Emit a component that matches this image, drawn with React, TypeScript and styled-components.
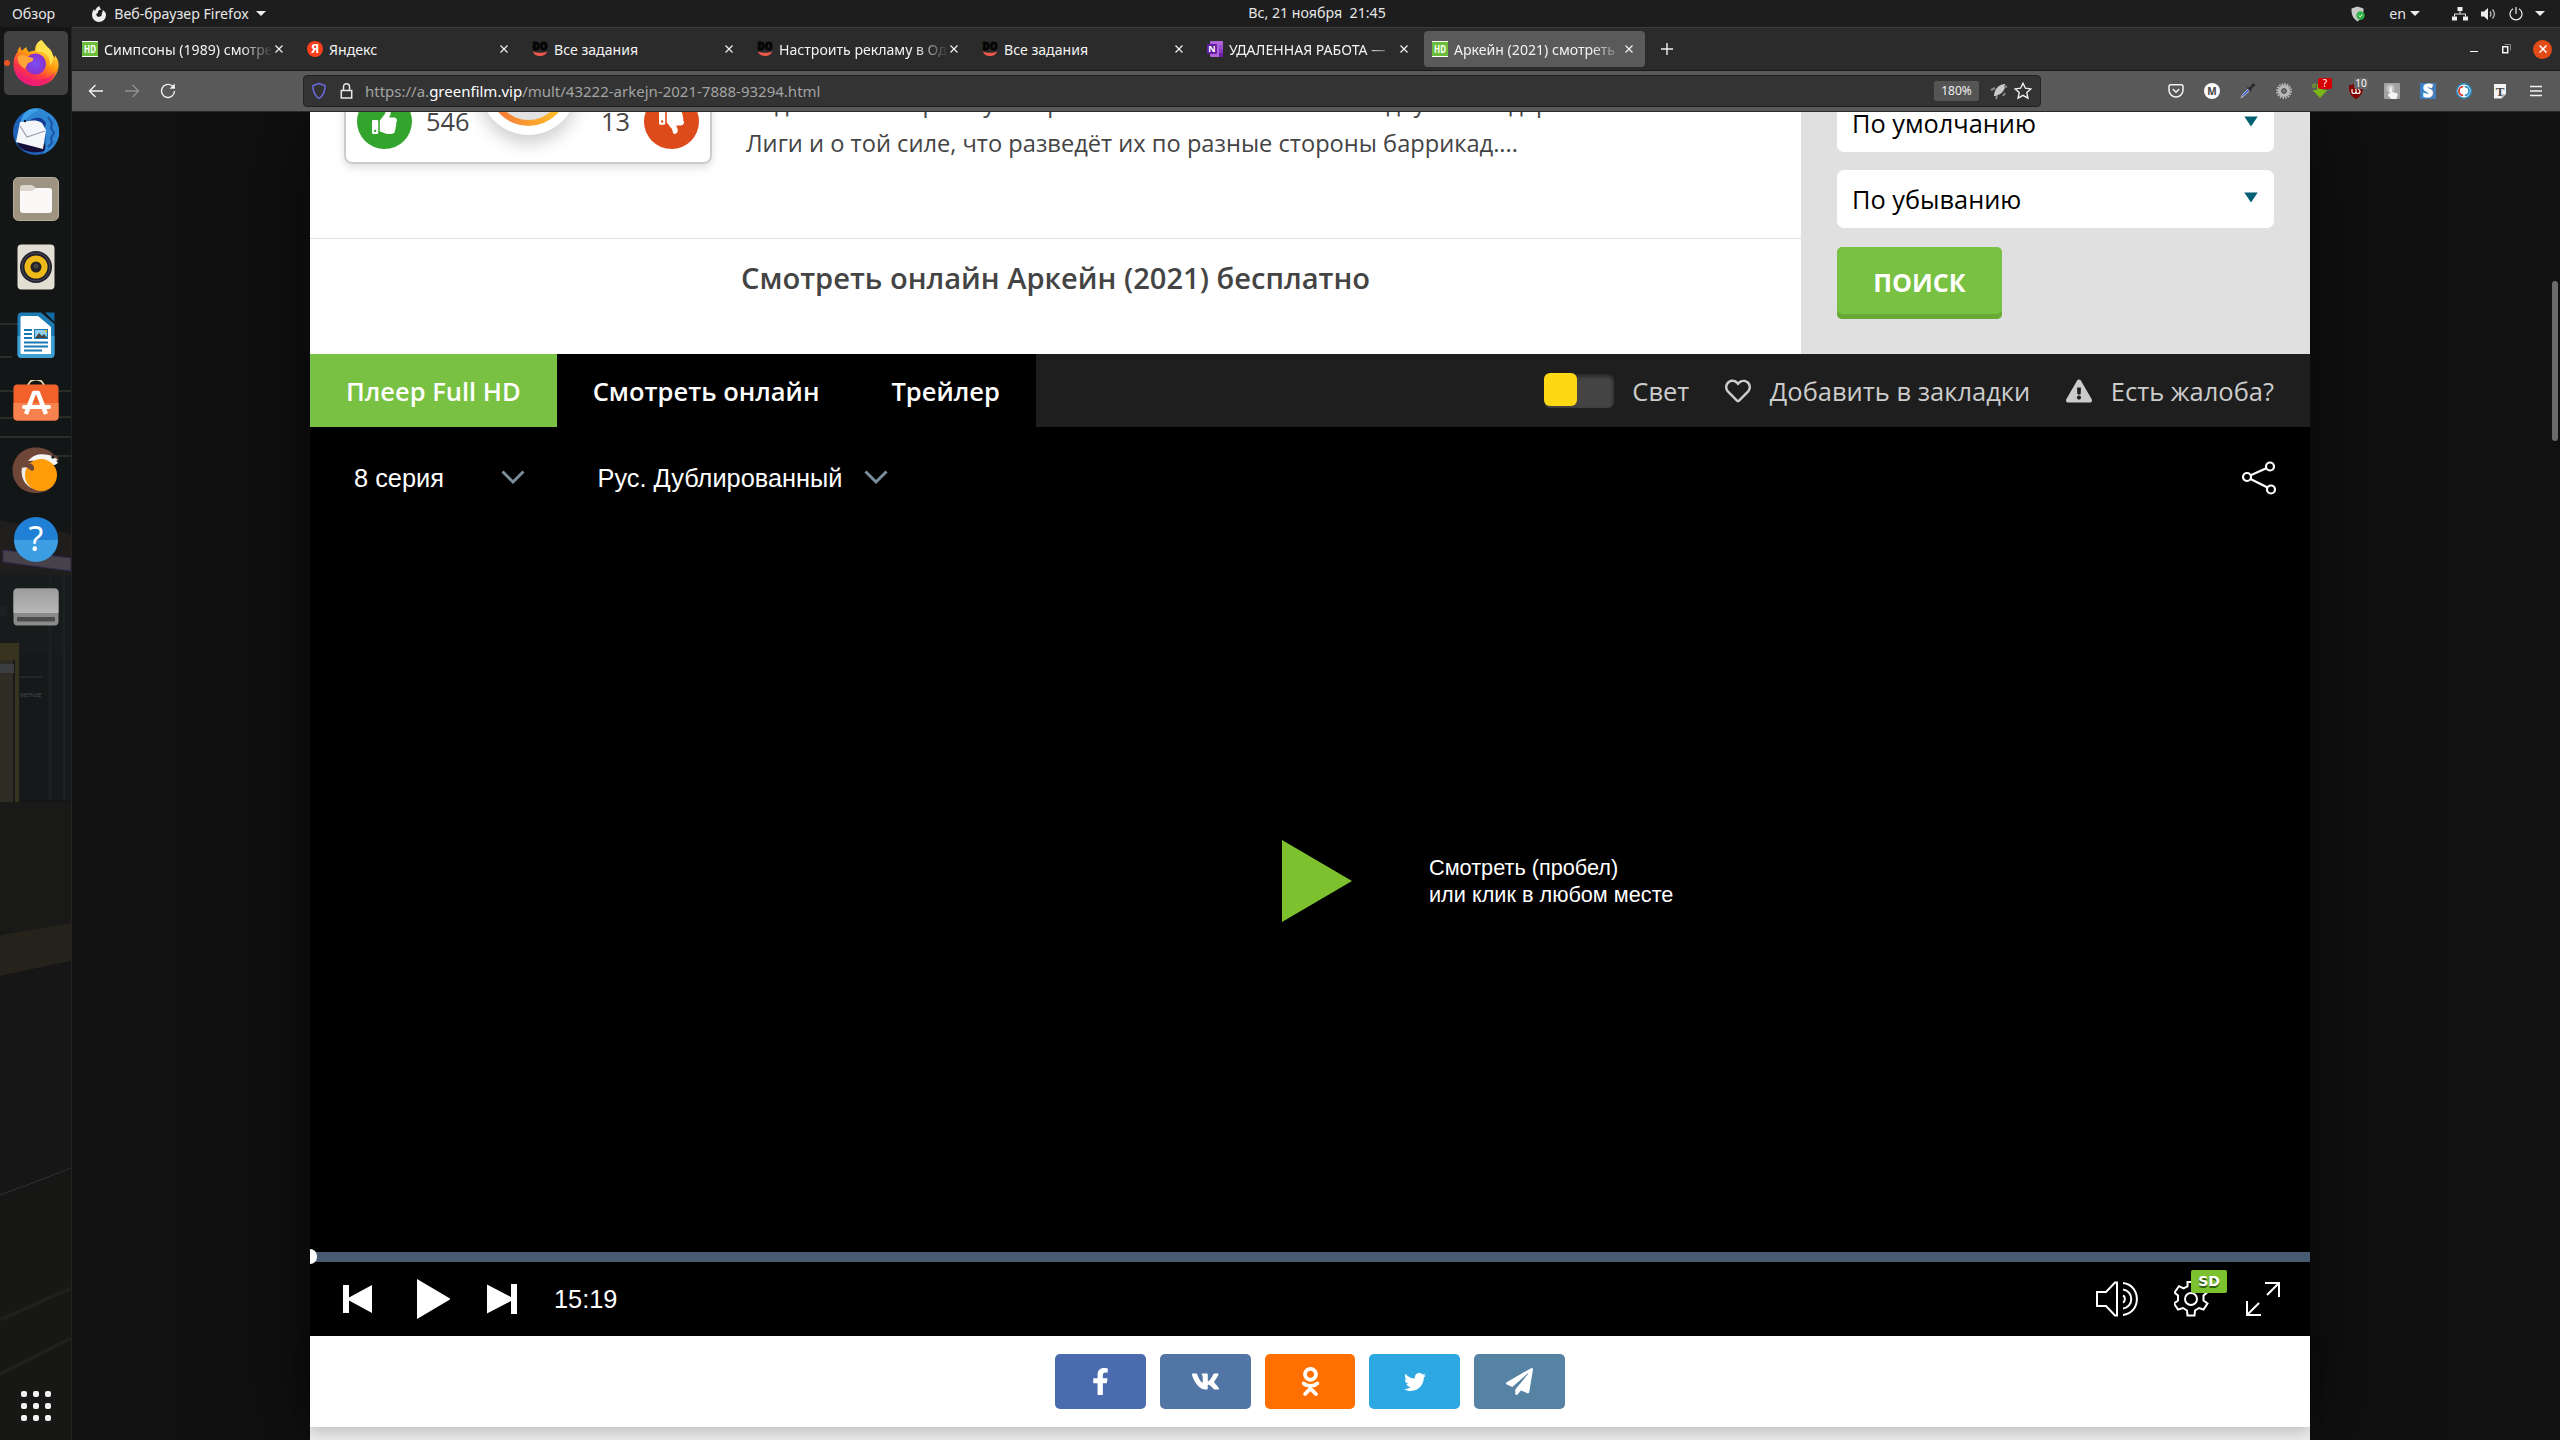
import React from "react";
import styled, { createGlobalStyle } from "styled-components";
import {
  FaFacebookF,
  FaVk,
  FaOdnoklassniki,
  FaTwitter,
  FaPaperPlane,
  FaThumbsUp,
  FaThumbsDown,
  FaRegHeart,
  FaExclamationTriangle,
} from "react-icons/fa";

const uiFont = `"Noto Sans", "Open Sans", sans-serif`;
const pageFont = `"Open Sans", "Noto Sans", sans-serif`;
const playerFont = `"Liberation Sans", Arial, sans-serif`;
const green = "#79c142";

const GlobalStyle = createGlobalStyle`
  *, *::before, *::after { box-sizing: border-box; }
  body { margin: 0; background: #111; overflow: hidden; font-family: ${uiFont}; }
  button { font: inherit; border: 0; padding: 0; background: none; color: inherit; }
  svg { display: block; flex: none; }
`;

/* ---------- desktop shell ---------- */

const Desktop = styled.div`
  width: 2560px;
  height: 1440px;
  display: grid;
  grid-template: 27px 1fr / 72px 1fr;
  overflow: hidden;
`;

const TopBar = styled.header`
  grid-column: 1 / 3;
  display: grid;
  grid-template-columns: 1fr auto 1fr;
  align-items: center;
  background: #1d1d1d;
  color: #e6e6e6;
  font-size: 14.2px;
  line-height: 26px;
  white-space: pre;
`;

const TopLeft = styled.div`
  display: flex;
  align-items: center;
  padding-left: 12px;
`;

const AppMenu = styled.div`
  display: flex;
  align-items: center;
  margin-left: 36px;
  gap: 7px;
`;

const Clock = styled.div`
  margin: 0 -37px 0 37px;
  padding-bottom: 1px;
`;

const Tray = styled.div`
  display: flex;
  align-items: center;
  justify-content: flex-end;
  padding-right: 15px;
`;

const TrayItem = styled.span<{ $gap: number }>`
  display: flex;
  align-items: center;
  margin-left: ${(p) => p.$gap}px;
`;

const Caret = styled.i`
  width: 0;
  height: 0;
  border: 5px solid transparent;
  border-top-color: #eee;
  border-bottom: 0;
`;

/* ---------- dock ---------- */

const Dock = styled.nav`
  position: relative;
  display: flex;
  flex-direction: column;
  align-items: center;
  gap: 4px;
  padding-top: 4px;
  background: #151616;
  border-right: 1px solid #232323;
  overflow: hidden;
`;

const Wallpaper = styled.svg`
  position: absolute;
  inset: 0;
`;

const DockItem = styled.div<{ $active?: boolean }>`
  position: relative;
  width: 64px;
  height: 64px;
  display: flex;
  align-items: center;
  justify-content: center;
  padding-bottom: 1px;
  border-radius: 5px;
  background: ${(p) => (p.$active ? "#424242" : "transparent")};
`;

const RunningDot = styled.i`
  position: absolute;
  left: 0;
  top: 29px;
  width: 6px;
  height: 6px;
  border-radius: 3px;
  background: #e95420;
`;

const AppsGrid = styled.div`
  position: relative;
  display: grid;
  grid-template-columns: repeat(3, 6px);
  gap: 6px;
  margin: auto 0 19px;
`;

const AppsDot = styled.i`
  height: 6px;
  border-radius: 2px;
  background: #f2f2f2;
`;

/* ---------- browser window ---------- */

const Browser = styled.main`
  display: flex;
  flex-direction: column;
  min-width: 0;
  overflow: hidden;
`;

const TabStrip = styled.div`
  height: 44px;
  flex: none;
  display: flex;
  align-items: center;
  background: #2b2b2b;
  border-top: 1px solid #3c3c3c;
  border-bottom: 1px solid #1a1a1a;
`;

const Tab = styled.div<{ $active?: boolean }>`
  width: 221px;
  height: 36px;
  margin: 0 2px;
  padding: 0 12px 0 8px;
  display: flex;
  align-items: center;
  gap: 6px;
  border-radius: 4px;
  background: ${(p) => (p.$active ? "#5a5a5a" : "transparent")};
  color: #f3f3f3;
`;

const TabTitle = styled.span<{ $fade?: boolean }>`
  flex: 1;
  min-width: 0;
  overflow: hidden;
  white-space: nowrap;
  font-size: 14.1px;
  line-height: 20px;
  padding-top: 1px;
  ${(p) => p.$fade && "mask-image: linear-gradient(90deg, #000 calc(100% - 32px), transparent);"}
`;

const TabClose = styled.svg`
  margin-left: -4px;
`;

const NewTab = styled.div`
  margin-left: 14px;
`;

const WindowButtons = styled.div`
  margin-left: auto;
  display: flex;
  align-items: center;
  padding-right: 8px;
  gap: 24px;
`;

const CloseWindow = styled.div`
  width: 19px;
  height: 19px;
  border-radius: 50%;
  background: #e24a18;
  display: grid;
  place-items: center;
  margin-left: -3px;
`;

const Toolbar = styled.div`
  height: 41px;
  flex: none;
  display: flex;
  align-items: center;
  background: #595959;
  border-bottom: 1px solid #2a2a2a;
  padding-left: 15px;
`;

const NavButtons = styled.div`
  display: flex;
  gap: 18px;
  width: 216px;
`;

const UrlBar = styled.div`
  width: 1738px;
  height: 32px;
  display: flex;
  align-items: center;
  background: #333;
  border: 1px solid #222;
  border-radius: 4px;
  padding: 0 4px 0 7px;
  color: #a3a3a3;
  font-size: 15px;
  line-height: 20px;
  b { font-weight: 400; color: #fff; }
`;

const LockIcon = styled.svg`
  margin-left: 13px;
`;

const UrlText = styled.span`
  margin-left: 12px;
  flex: 1;
`;

const ZoomBadge = styled.span`
  width: 45px;
  height: 20px;
  margin-right: 11px;
  border-radius: 2px;
  background: #555;
  color: #f0f0f0;
  font-size: 12px;
  line-height: 20px;
  text-align: center;
`;

const Extensions = styled.div`
  display: flex;
  margin-left: auto;
  padding-right: 6px;
`;

const ExtButton = styled.span`
  position: relative;
  width: 36px;
  height: 28px;
  display: grid;
  place-items: center;
`;

const ExtBadge = styled.span<{ $bg: string }>`
  position: absolute;
  left: 16px;
  top: 1px;
  min-width: 14px;
  height: 11px;
  padding: 0 1px;
  border-radius: 2px;
  background: ${(p) => p.$bg};
  color: #fff;
  font: 10px/11px ${uiFont};
  text-align: center;
`;

/* ---------- site ---------- */

const Viewport = styled.div`
  flex: 1;
  min-height: 0;
  display: flex;
  justify-content: flex-start;
  padding-left: 238px;
  background: #111;
  overflow: hidden;
  position: relative;
`;

const Site = styled.div`
  width: 2000px;
  display: flex;
  flex-direction: column;
  background: #ebebeb;
  font-family: ${pageFont};
  box-shadow: 0 0 90px rgba(0, 0, 0, 0.7);
`;

const Scrollbar = styled.i`
  position: absolute;
  right: 2px;
  top: 169px;
  width: 6px;
  height: 160px;
  border-radius: 3px;
  background: #6a6a6a;
`;

const Upper = styled.div`
  height: 242px;
  display: flex;
`;

const MainColumn = styled.section`
  width: 1491px;
  background: #fff;
  color: #444;
`;

const Summary = styled.div`
  height: 127px;
  display: flex;
  overflow: hidden;
  border-bottom: 1px solid #e1e1e1;
  padding-left: 34px;
`;

const RatingCard = styled.div`
  position: relative;
  width: 368px;
  height: 86px;
  margin-top: -34px;
  display: flex;
  align-items: center;
  justify-content: space-between;
  padding: 0 11px 0 11px;
  border: 2px solid #ccc;
  border-radius: 8px;
  box-shadow: 0 4px 8px rgba(0, 0, 0, 0.12);
  font-size: 25.4px;
`;

const Votes = styled.div`
  display: flex;
  align-items: center;
  gap: 14px;
`;

const VoteButton = styled.button<{ $bg: string }>`
  width: 55px;
  height: 55px;
  border-radius: 50%;
  display: grid;
  place-items: center;
  background: ${(p) => p.$bg};
  color: #fff;
  font-size: 25px;
`;

const ScoreDial = styled.div`
  position: absolute;
  left: 134px;
  top: -42px;
  width: 97px;
  height: 97px;
  padding: 9px;
  border-radius: 50%;
  background: #fff;
  box-shadow: 0 8px 18px rgba(0, 0, 0, 0.2);
`;

const ScoreRing = styled.div`
  height: 100%;
  padding: 6px;
  border-radius: 50%;
  background: linear-gradient(90deg, #f5703a, #ffc927);
`;

const ScoreCore = styled.div`
  height: 100%;
  border-radius: 50%;
  background: #e2e2e2;
`;

const Description = styled.p`
  margin: -29px 0 0 34px;
  white-space: pre;
  font-size: 23.65px;
  line-height: 40px;
`;

const Title = styled.h2`
  margin: 0;
  height: 82px;
  text-align: center;
  font-size: 29.1px;
  font-weight: 600;
  line-height: 78px;
`;

const Sidebar = styled.aside`
  flex: 1;
  display: flex;
  flex-direction: column;
  align-items: flex-start;
  padding: 0 36px;
  background: #e0e0e0;
`;

const Select = styled.div<{ $mt: number }>`
  width: 437px;
  height: 58px;
  flex: none;
  margin-top: ${(p) => p.$mt}px;
  padding: 0 17px 1px 15px;
  display: flex;
  align-items: center;
  justify-content: space-between;
  border-radius: 7px;
  background: #fff;
  color: #000;
  font-size: 25.35px;
  line-height: 36px;
`;

const SelectArrow = styled.svg`
  margin: -2px -1px 0 0;
`;

const SearchButton = styled.button`
  width: 165px;
  height: 72px;
  margin-top: 19px;
  padding-bottom: 2px;
  border-radius: 5px;
  background: ${green};
  box-shadow: inset 0 -5px #68aa34;
  color: #fff;
  font-size: 25.2px;
  font-weight: 700;
`;

const PlayerTabs = styled.div`
  height: 73px;
  display: flex;
  background: #1e1e1e;
  color: #fff;
  font-size: 25.5px;
  line-height: 75px;
`;

const PlayerTab = styled.div<{ $active?: boolean }>`
  padding: 0 36px;
  font-weight: 600;
  background: ${(p) => (p.$active ? green : "#000")};
`;

const PlayerActions = styled.div`
  margin-left: auto;
  padding: 1px 36px 0 0;
  display: flex;
  align-items: center;
  gap: 36px;
  color: #ccc;
`;

const Action = styled.div`
  display: flex;
  align-items: center;
  gap: 18.5px;
`;

const LightToggle = styled.span`
  width: 70px;
  height: 34px;
  border-radius: 6px;
  background: #444;
  box-shadow: inset 0 2px 4px rgba(0, 0, 0, 0.5);
`;

const LightKnob = styled.i`
  display: block;
  width: 33px;
  height: 33px;
  margin-top: -1px;
  border-radius: 6px;
  background: #ffd814;
`;

const Player = styled.section`
  height: 909px;
  display: flex;
  flex-direction: column;
  background: #000;
  color: #fff;
  font: 25.35px/30px ${playerFont};
`;

const PlayerHead = styled.div`
  height: 102px;
  display: flex;
  align-items: center;
  padding: 0 34px 0 44px;
`;

const Dropdown = styled.div<{ $width: number; $mr?: number }>`
  width: ${(p) => p.$width}px;
  margin-right: ${(p) => p.$mr ?? 0}px;
  display: flex;
  align-items: center;
  justify-content: space-between;
`;

const ChevronIcon = styled.svg`
  margin-top: -2px;
`;

const ShareIcon = styled.svg`
  margin-left: auto;
`;

const Stage = styled.div`
  flex: 1;
  display: flex;
  align-items: flex-start;
  padding: 311px 0 0 972px;
  gap: 77px;
`;

const Hint = styled.div`
  margin-top: 14px;
  font-size: 21.7px;
  line-height: 27px;
`;

const Progress = styled.div`
  height: 10px;
  display: flex;
  align-items: center;
  background: #475c73;
`;

const ProgressKnob = styled.i`
  width: 7px;
  height: 15px;
  margin-bottom: 1px;
  border-radius: 0 8px 8px 0;
  background: #fff;
`;

const Controls = styled.div`
  height: 74px;
  display: flex;
  align-items: center;
  padding: 0 30px 0 33px;
`;

const ControlGroup = styled.div<{ $gap: number; $right?: boolean }>`
  display: flex;
  align-items: center;
  gap: ${(p) => p.$gap}px;
  margin-left: ${(p) => (p.$right ? "auto" : "0")};
`;

const Quality = styled.span`
  position: relative;
`;

const QualityBadge = styled.span`
  position: absolute;
  left: 17px;
  top: -11px;
  width: 36px;
  height: 23px;
  border-radius: 2px;
  background: #7cc12f;
  color: #fff;
  font: 700 14px/23px "DejaVu Sans", sans-serif;
  text-align: center;
  text-shadow: 0 2px #35600f;
`;

const ShareRow = styled.div`
  height: 91px;
  flex: none;
  display: flex;
  justify-content: center;
  align-items: center;
  gap: 14px;
  background: #fff;
  box-shadow: 0 4px 14px rgba(0, 0, 0, 0.2);
`;

const ShareButton = styled.button<{ $bg: string; $size: number }>`
  width: 90.7px;
  height: 55px;
  border-radius: 5px;
  display: grid;
  place-items: center;
  background: ${(p) => p.$bg};
  color: #fff;
  font-size: ${(p) => p.$size}px;
`;

/* ---------- favicons ---------- */

const HdFavicon = () => (
  <svg width="16" height="16" viewBox="0 0 16 16">
    <rect width="16" height="16" fill="#fff" />
    <rect y="1" width="16" height="14" fill="#6cbd3a" />
    <text x="8" y="12" textAnchor="middle" fontSize="10.500" fontWeight="700" fill="#fff" textLength="12" lengthAdjust="spacingAndGlyphs">HD</text>
  </svg>
);

const YandexFavicon = () => (
  <svg width="16" height="16" viewBox="0 0 16 16">
    <circle cx="8" cy="8" r="8" fill="#fc3f1d" />
    <text x="8" y="12.400" textAnchor="middle" fontSize="12" fontWeight="700" fill="#fff">Я</text>
  </svg>
);

const DoFavicon = () => (
  <svg width="16" height="16" viewBox="0 0 16 16">
    <text x="8" y="9" textAnchor="middle" fontSize="11" fontWeight="900" fill="#050505" stroke="#050505" textLength="15" lengthAdjust="spacingAndGlyphs">DO</text>
    <path d="M1 10.500h14c-1 3.400-4 4.500-7 4.500s-6-1.100-7-4.500c3 1.700 11 1.700 14 0z" fill="#f0584c" />
  </svg>
);

const NoteFavicon = () => (
  <svg width="16" height="16" viewBox="0 0 16 16">
    <rect x="3" width="13" height="16" rx="1" fill="#b065dc" />
    <rect x="12" y="4" width="4" height="4" fill="#9a4fd0" />
    <rect x="12" y="8" width="4" height="4" fill="#8a3cc2" />
    <rect x="12" y="12" width="4" height="4" fill="#6c1fa8" />
    <rect y="3" width="10" height="10" rx="1" fill="#6320a3" />
    <text x="5" y="11.200" textAnchor="middle" fontSize="9" fontWeight="700" fill="#fff">N</text>
  </svg>
);

const tabs = [
  { icon: <HdFavicon />, title: "Симпсоны (1989) смотре", fade: true },
  { icon: <YandexFavicon />, title: "Яндекс" },
  { icon: <DoFavicon />, title: "Все задания" },
  { icon: <DoFavicon />, title: "Настроить рекламу в Од", fade: true },
  { icon: <DoFavicon />, title: "Все задания" },
  { icon: <NoteFavicon />, title: "УДАЛЕННАЯ РАБОТА —", fade: true },
  { icon: <HdFavicon />, title: "Аркейн (2021) смотреть", fade: true, active: true },
];

/* ---------- dock icons ---------- */

const FirefoxIcon = () => (
  <svg width="46" height="48" viewBox="0 0 46 48">
    <defs>
      <linearGradient id="fx1" x1=".8" y1=".1" x2=".3" y2="1">
        <stop offset="0" stopColor="#fff44f" />
        <stop offset=".4" stopColor="#ff980e" />
        <stop offset=".7" stopColor="#ff3647" />
        <stop offset="1" stopColor="#e31587" />
      </linearGradient>
      <radialGradient id="fx2">
        <stop offset="0" stopColor="#7a4ff5" />
        <stop offset="1" stopColor="#8b2fc9" />
      </radialGradient>
    </defs>
    <path d="M23 47C10 47 0.500 37.500 0.500 25c0-5 1.500-9 4-12 .3-2.500 1.500-4.500 3-5.500 0 1.500.5 3 1.300 4.200C11 10 12 9 13.500 8c0 2 1 4 2.500 5 2-1 4-1.500 6-1.500C22 6 25 2.500 28.500 1c.5 5 4 7.500 7.500 11 2 1.200 2.500 2.500 3 4 1.500.5 2 1.500 2.500 3 .5-1 .5-2 .3-3C45 20 46 24 45.500 28 44 39 35 47 23 47z" fill="url(#fx1)" />
    <circle cx="22.500" cy="25" r="10.500" fill="url(#fx2)" />
    <path d="M5 17c6-3 9 1 15 2 1 3-2 4-5 5-1 3-2 3-3 6-5-3-8-7-7-13z" fill="#ffa436" />
    <path d="M24 13c8-2 15 6 12.500 14 6-6 4-15-2-19L28.500 1C25 3 22 8 24 13z" fill="#ffe14d" />
    <path d="M4 32c5 8 28 14 38 1-3 9-10 14-19 14S6 41 4 32z" fill="#f01c73" opacity=".7" />
  </svg>
);

const ThunderbirdIcon = () => (
  <svg width="48" height="48" viewBox="0 0 48 48">
    <circle cx="24" cy="25" r="23" fill="#1f62b8" />
    <path d="M6 34c-4 8 18 16 30 8l-6-8z" fill="#150f38" />
    <path d="M9 12C14 0 28-2 34 5c10 4 14 13 13 24-2 8-8 15-16 18 4-8 4-20 0-28z" fill="#2f86d3" />
    <path d="M8 18C10 5 18-1 27 3l-8 4z" fill="#3d9fe5" />
    <path d="M17 14c6-5 14-4 17 2l-2 8-6-8z" fill="#123f94" />
    <path d="M4 35l4-20c8 0 14-4 22 1l4 7-3 19z" fill="#f4f6fa" />
    <path d="M8 19l7 11 18-6" fill="none" stroke="#98a0ac" strokeWidth="1.200" />
    <circle cx="13" cy="14" r="1.200" fill="#0b1b3a" />
    <path d="M36 10l4 6-1 5 3 5-3 5 1 5-4 4" fill="none" stroke="#1b55a6" strokeWidth="2" />
  </svg>
);

const FilesIcon = () => (
  <svg width="46" height="46" viewBox="0 0 46 46">
    <rect x=".5" y="1.500" width="45" height="43" rx="5" fill="#9d9482" stroke="#b5ad9d" />
    <path d="M7 12a3 3 0 0 1 3-3h9l4 3h13a3 3 0 0 1 3 3v3H7z" fill="#dbd7cd" />
    <path d="M7 15h12l4-3h13a3 3 0 0 1 3 3v19a3 3 0 0 1-3 3H10a3 3 0 0 1-3-3z" fill="#faf9f7" />
  </svg>
);

const MusicIcon = () => (
  <svg width="38" height="46" viewBox="0 0 38 46">
    <rect x=".5" y=".5" width="37" height="45" rx="4" fill="#e3ded4" />
    <circle cx="19" cy="23" r="16" fill="#22222e" />
    <circle cx="19" cy="23" r="14" fill="none" stroke="#4a4a55" />
    <circle cx="19" cy="23" r="11.500" fill="#eebb18" />
    <circle cx="19" cy="23" r="5.500" fill="#222" />
    <circle cx="19" cy="22" r="2.500" fill="#444" />
  </svg>
);

const WriterIcon = () => (
  <svg width="38" height="46" viewBox="0 0 38 46">
    <path d="M4 .5h20L37.500 12v30a4 4 0 0 1-4 4h-29a4 4 0 0 1-4-4V4.500A4 4 0 0 1 4 .5z" fill="#1c7cb5" />
    <path d="M.5 24h37v18a4 4 0 0 1-4 4h-29a4 4 0 0 1-4-4z" fill="#3e9fd1" />
    <path d="M28 .5h9.500V10z" fill="#0f6aa5" />
    <path d="M5 4h16L34 15v27H5a1.500 1.500 0 0 1-1.500-1.500V5.500A1.500 1.500 0 0 1 5 4z" fill="#fff" />
    <path d="M7 18h8M7 22h8M7 26h8M7 30.500h24M7 34.500h24M7 38.500h18" stroke="#1878b4" strokeWidth="2" />
    <rect x="17.500" y="17.500" width="13" height="9" fill="#8fd0f2" stroke="#1878b4" />
    <path d="M18 26l4-5 3 3 2-2 3.500 4z" fill="#444" />
    <path d="M27 18h3v3z" fill="#f6b61a" />
  </svg>
);

const SoftwareIcon = () => (
  <svg width="46" height="46" viewBox="0 2 46 46">
    <path d="M15 8c0-10 16-10 16 0" fill="none" stroke="#f0d9a6" strokeWidth="1.800" transform="translate(0 1)" />
    <rect x=".5" y="6.500" width="45" height="36" rx="4" fill="#f2622a" />
    <path d="M.5 25h45v13.500a4 4 0 0 1-4 4h-37a4 4 0 0 1-4-4z" fill="#f6824f" />
    <path d="M13 36l8-21h4l8 21" fill="none" stroke="#fff" strokeWidth="4.500" strokeLinejoin="round" />
    <path d="M11 29h25" stroke="#fff" strokeWidth="4" strokeLinecap="round" />
  </svg>
);

const OtterIcon = () => (
  <svg width="47" height="47" viewBox="0 0 47 47">
    <path d="M24 .5C10 .5.500 11 .5 23.500S10 46 24 46c8 0 14-3 18-8L24 20l10-8 13 3c0-4-2-6-6-8-3-4-10-6.500-17-6.500z" fill="#6f4739" />
    <path d="M16 14C22 6 32 6 40 9l6 4c1 3-2 5-5 5-8-4-16-5-25-4z" fill="#f7f5f3" />
    <path d="M10 20c-2 12 4 22 18 23 6-1 9-3 12-6L18 16z" fill="#efeae6" />
    <circle cx="29" cy="28" r="16" fill="#ff9c07" />
    <path d="M11 17c4-2 10-1 11 3s-2 5-5 2c-2-2-4-2-7-1z" fill="#6f4739" />
    <circle cx="41" cy="10" r="1.800" fill="#222" />
    <circle cx="46" cy="14" r="1.300" fill="#222" />
  </svg>
);

const HelpIcon = () => (
  <svg width="46" height="46" viewBox="0 0 46 46">
    <circle cx="23" cy="23" r="22" fill="#1f80d6" />
    <path d="M1 24a22 22 0 0 0 44 0z" fill="#3c9de2" />
    <text x="23" y="35" textAnchor="middle" fontSize="34" fill="#fff">?</text>
  </svg>
);

const DriveIcon = () => (
  <svg width="46" height="38" viewBox="0 0 46 38">
    <defs>
      <linearGradient id="drv" x2="0" y2="1">
        <stop offset="0" stopColor="#9c9c9c" />
        <stop offset="1" stopColor="#b8b8b8" />
      </linearGradient>
    </defs>
    <rect x=".5" y=".5" width="45" height="37" rx="4" fill="#8b8b8b" />
    <path d="M4.500.500h37a4 4 0 0 1 4 4V25H.5V4.500a4 4 0 0 1 4-4z" fill="url(#drv)" />
    <rect x="4" y="29" width="38" height="4.500" rx="1" fill="#4c4c4c" />
  </svg>
);

const dockIcons = [FirefoxIcon, ThunderbirdIcon, FilesIcon, MusicIcon, WriterIcon, SoftwareIcon, OtterIcon, HelpIcon, DriveIcon];

const DockWallpaper = () => (
  <Wallpaper width="71" height="1413" viewBox="0 27 71 1413">
    <rect y="27" width="71" height="300" fill="#141515" />
    <rect y="327" width="71" height="200" fill="#131616" />
    <path d="M0 324h18M0 357h12M0 391h71M0 418l71-1M0 437h71M40 456h31" stroke="#2c2d26" strokeWidth="2" />
    <path d="M0 520l71 14v120H0z" fill="#1f1e1c" />
    <path d="M0 606h6v10H0z" fill="#3b3748" />
    <rect y="575" width="71" height="225" fill="#151a1c" opacity=".8" />
    <path d="M3 550l68 8v13L3 562z" fill="#454249" stroke="#332750" />
    <path d="M50 575v225M64 575v225" stroke="#1b2022" strokeWidth="3" />
    <rect y="643" width="19" height="159" fill="#38331f" />
    <rect y="660" width="14" height="142" fill="#2f2d23" />
    <path d="M14 660v142" stroke="#15191b" strokeWidth="2" />
    <rect y="664" width="14" height="9" fill="#3b3d40" />
    <text x="20" y="697" fontSize="7.500" fill="#45494a">venue</text>
    <path d="M19 677h23" stroke="#30393a" />
    <rect y="802" width="71" height="130" fill="#191917" />
    <path d="M0 935l71-12v38L0 976z" fill="#25221b" />
    <path d="M0 976l71-15v479H0z" fill="#161616" />
    <path d="M0 1200l71-28v268H0z" fill="#171716" />
    <path d="M0 1195q36-13 71-27" fill="none" stroke="#30302f" />
    <path d="M0 1320l71-32M0 1374l71-36" stroke="#1f1f1b" strokeWidth="4" />
  </Wallpaper>
);

/* ---------- toolbar icons ---------- */

const stroke = { fill: "none", stroke: "#f2f2f2", strokeWidth: 1.4 } as const;

const ShieldOkIcon = () => (
  <svg width="14" height="16" viewBox="0 0 14 16">
    <path d="M6.500.5l6 2c.3 6-1.500 10-6 13-4.500-3-6.300-7-6-13z" fill="#c9c9c9" />
    <circle cx="9.500" cy="9.500" r="4.200" fill="#2fb344" />
    <path d="M7.700 9.500l1.400 1.400 2.200-2.400" fill="none" stroke="#fff" />
  </svg>
);

const NetworkIcon = () => (
  <svg width="16" height="14" viewBox="0 0 16 14" fill="#eee">
    <path d="M5.500 0h5v4h-5zM0 9.500h5V13.500H0zM11 9.500h5v4h-5z" />
    <path d="M8 4v2.800M2.500 9.500V7h11v2.500" fill="none" stroke="#eee" />
  </svg>
);

const SoundIcon = () => (
  <svg width="15" height="14" viewBox="0 0 15 14">
    <path d="M0 4.500h3L7 1v12L3 9.500H0z" fill="#eee" />
    <path d="M9 4.500c1.200 1.500 1.200 3.500 0 5M11.500 2.500c2.300 2.700 2.300 6.300 0 9" fill="none" stroke="#bbb" strokeWidth="1.300" />
  </svg>
);

const PowerIcon = () => (
  <svg width="14" height="14" viewBox="0 0 14 14" fill="none" stroke="#eee" strokeWidth="1.200">
    <path d="M7 0v7M4 1.700a6 6 0 1 0 6 0" />
  </svg>
);

const FlameIcon = () => (
  <svg width="16" height="16" viewBox="0 0 16 16">
    <path d="M8 16a7 7 0 0 1-7-7c0-3 1.200-4.500 2-6 .3 1 .6 1.500 1 2C4.800 2.500 6.500.8 8.500 0c0 1.500.5 2.500 2 3.500-3 0-4 2-3.500 3.500-1.500 0-2 1-1.500 2.300C6 10.500 7 11 8.500 10.800c2-.3 2.700-2 2.200-3.800 1-.5 1-2 .8-3C14 5 15 7 15 9a7 7 0 0 1-7 7z" fill="#eee" />
  </svg>
);

const extensions: { icon: React.ReactNode; badge?: [string, string] }[] = [
  {
    icon: (
      <svg width="16" height="14" viewBox="0 0 16 14" {...stroke} strokeWidth="1.500">
        <path d="M2.500.8h11a1.500 1.500 0 0 1 1.500 1.500V6a7 7 0 0 1-14 0V2.300A1.500 1.500 0 0 1 2.500.8zM4.800 5L8 8.200 11.200 5" />
      </svg>
    ),
  },
  {
    icon: (
      <svg width="16" height="16" viewBox="0 0 16 16">
        <circle cx="8" cy="8" r="8" fill="#fafafa" />
        <text x="8" y="11.600" textAnchor="middle" fontSize="10" fontWeight="700" fill="#444">M</text>
      </svg>
    ),
  },
  {
    icon: (
      <svg width="16" height="16" viewBox="0 0 16 16">
        <path d="M1 15l1.500-3.500L8 6l1.500 1.500-5.500 5.500z" fill="#3f63d8" stroke="#ccc" strokeWidth=".8" />
        <path d="M7.500 4l2 .5L13 0l2.500 2-4.500 4.500.5 1.500-1 .5L7 5z" fill="#2b2b2e" />
      </svg>
    ),
  },
  {
    icon: (
      <svg width="16" height="16" viewBox="0 0 16 16">
        <circle cx="8" cy="8" r="6.800" fill="none" stroke="#bdbdbd" strokeWidth="2.200" strokeDasharray="1.500 1.170" />
        <circle cx="8" cy="8" r="4.300" fill="none" stroke="#b8b8b8" strokeWidth="3.600" />
        <circle cx="8" cy="8" r="2.300" fill="#777" stroke="#444" />
      </svg>
    ),
  },
  {
    icon: (
      <svg width="16" height="16" viewBox="0 0 16 16">
        <path d="M5 1h6v6h4.500L8 15 .5 7H5z" fill="#7cb518" />
        <path d="M1 1v4M3 0v5" stroke="#7cb518" />
      </svg>
    ),
    badge: ["?", "#d70000"],
  },
  {
    icon: (
      <svg width="16" height="16" viewBox="0 0 16 16">
        <path d="M8 0c2 1.500 4.500 2 7 2 0 7-1 10.500-7 14C2 12.500 1 9 1 2c2.500 0 5-.5 7-2z" fill="#800000" />
        <path d="M4 6v2.500a2 2 0 0 0 4 0V6M8 8.500a2 2 0 1 0 2-2" fill="none" stroke="#fff" strokeWidth="1.200" />
      </svg>
    ),
    badge: ["10", "#666"],
  },
  {
    icon: (
      <svg width="16" height="16" viewBox="0 0 16 16">
        <rect width="16" height="16" rx="1" fill="#a2a2a2" />
        <circle cx="6.500" cy="5.500" r="4" fill="#c4c4c4" />
        <path d="M5.500 5a1.200 1.200 0 0 1 2.400 0v4l4.600 1c1 .3 1.200 1 1 2l-.8 4H7L3.500 11.500l1-.8 1 .6z" fill="#f1f5f8" />
      </svg>
    ),
  },
  {
    icon: (
      <svg width="16" height="16" viewBox="0 0 16 16">
        <rect width="16" height="16" fill="#3f7fbf" />
        <text x="8" y="14" textAnchor="middle" fontSize="17" fontWeight="900" fill="#fff" stroke="#fff">S</text>
      </svg>
    ),
  },
  {
    icon: (
      <svg width="16" height="16" viewBox="0 0 16 16">
        <circle cx="8" cy="8" r="7.200" fill="#fff" stroke="#2a8fc4" strokeWidth="1.500" />
        <path d="M7.200 3.700a4.300 4.300 0 0 0 0 8.600" fill="none" stroke="#d8342c" strokeWidth="1.800" />
        <path d="M8.800 3.700a4.300 4.300 0 0 1 0 8.600" fill="none" stroke="#2a8fc4" strokeWidth="1.800" />
      </svg>
    ),
  },
  {
    icon: (
      <svg width="14" height="15" viewBox="0 0 14 15">
        <path d="M1 0h12v10l-4.500 4.500H1z" fill="#f5f5f5" />
        <path d="M13 10l-4.500 4.500V10z" fill="#bbb" />
        <text x="7" y="12" textAnchor="middle" fontSize="13" fontFamily="Liberation Serif, serif" fontWeight="700" fill="#444">T</text>
      </svg>
    ),
  },
  {
    icon: (
      <svg width="12" height="12" viewBox="0 0 12 12" {...stroke}>
        <path d="M0 1.500h12M0 6h12M0 10.500h12" />
      </svg>
    ),
  },
];

const Chevron = () => (
  <ChevronIcon width="24" height="15" viewBox="0 0 24 15" fill="none" stroke="#7b8d9b" strokeWidth="3">
    <path d="M1.500 1.500L12 12l10.500-10.500" />
  </ChevronIcon>
);

const shareLinks = [
  { bg: "#4a6bad", icon: <FaFacebookF />, size: 27 },
  { bg: "#5175a4", icon: <FaVk />, size: 29 },
  { bg: "#ff7000", icon: <FaOdnoklassniki />, size: 29 },
  { bg: "#2da8e2", icon: <FaTwitter />, size: 22 },
  { bg: "#5682a3", icon: <FaPaperPlane />, size: 27 },
];

export default function App() {
  return (
    <>
      <GlobalStyle />
      <Desktop>
        <TopBar>
          <TopLeft>
            Обзор
            <AppMenu>
              <FlameIcon />
              <span>Веб-браузер Firefox</span>
              <Caret />
            </AppMenu>
          </TopLeft>
          <Clock>Вс, 21 ноября  21:45</Clock>
          <Tray>
            <TrayItem $gap={0}><ShieldOkIcon /></TrayItem>
            <TrayItem $gap={24}>en</TrayItem>
            <TrayItem $gap={4}><Caret /></TrayItem>
            <TrayItem $gap={32}><NetworkIcon /></TrayItem>
            <TrayItem $gap={13}><SoundIcon /></TrayItem>
            <TrayItem $gap={13}><PowerIcon /></TrayItem>
            <TrayItem $gap={12}><Caret /></TrayItem>
          </Tray>
        </TopBar>

        <Dock>
          <DockWallpaper />
          {dockIcons.map((Icon, i) => (
            <DockItem key={i} $active={i === 0}>
              {i === 0 && <RunningDot />}
              <Icon />
            </DockItem>
          ))}
          <AppsGrid>
            {Array.from({ length: 9 }, (_, i) => <AppsDot key={i} />)}
          </AppsGrid>
        </Dock>

        <Browser>
          <TabStrip>
            {tabs.map((t, i) => (
              <Tab key={i} $active={t.active}>
                {t.icon}
                <TabTitle $fade={t.fade}>{t.title}</TabTitle>
                <TabClose width="8" height="8" viewBox="0 0 8 8" {...stroke} strokeWidth="1.200">
                  <path d="M.5.500l7 7M7.500.500l-7 7" />
                </TabClose>
              </Tab>
            ))}
            <NewTab>
              <svg width="12" height="12" viewBox="0 0 12 12" {...stroke}>
                <path d="M6 0v12M0 6h12" />
              </svg>
            </NewTab>
            <WindowButtons>
              <svg width="8" height="10" viewBox="0 0 8 10"><rect y="7" width="8" height="1" fill="#fff" /></svg>
              <svg width="10" height="10" viewBox="0 0 10 10">
                <path d="M2.500.500h6v6" fill="none" stroke="#888" />
                <rect x=".75" y="2.750" width="5" height="6" fill="none" stroke="#fff" strokeWidth="1.400" />
              </svg>
              <CloseWindow>
                <svg width="8" height="8" viewBox="0 0 8 8" stroke="#fff" strokeWidth="1.500"><path d="M.5.500l7 7M7.500.500l-7 7" /></svg>
              </CloseWindow>
            </WindowButtons>
          </TabStrip>

          <Toolbar>
            <NavButtons>
              <svg width="18" height="18" viewBox="0 0 18 18" {...stroke}><path d="M16 9H2.500M8.500 3l-6 6 6 6" /></svg>
              <svg width="18" height="18" viewBox="0 0 18 18" {...stroke} stroke="#909090"><path d="M2 9h13.500M9.500 3l6 6-6 6" /></svg>
              <svg width="18" height="18" viewBox="0 0 18 18" {...stroke}><path d="M15.500 9a6.500 6.500 0 1 1-2.500-5.200L15.500 6" /><path d="M15.800 1.500v5.300h-5.300z" fill="#f2f2f2" stroke="none" /></svg>
            </NavButtons>
            <UrlBar>
              <svg width="16" height="18" viewBox="0 0 16 18" fill="none" stroke="#6a6ae0" strokeWidth="1.500"><path d="M8 1.500l6 2c.2 6-1.500 10-6 13-4.500-3-6.200-7-6-13z" /></svg>
              <LockIcon width="13" height="18" viewBox="-.5 0 13 18" fill="none" stroke="#e8e8e8" strokeWidth="1.500"><path d="M.8 8.500h10.400v7.500H.8zM3 8.500V4.700a3 3 0 0 1 6 0v3.800" /></LockIcon>
              <UrlText>https://a.<b>greenfilm.vip</b>/mult/43222-arkejn-2021-7888-93294.html</UrlText>
              <ZoomBadge>180%</ZoomBadge>
              <svg width="20" height="18" viewBox="0 0 20 18"><path d="M4 14C4 7 9 2 15 2c1 5-3 10-9 12z" fill="#c9c9c9" /><path d="M1 8l4-2M13 14l2-3M6 17l1-3M14 4l3 1" stroke="#8a8a8a" strokeWidth="2" /></svg>
              <svg width="26" height="18" viewBox="-4 0 26 18" {...stroke}><path d="M9 1.200l2.400 5 5.400.7-4 3.700 1.100 5.500L9 13.400l-4.900 2.700 1.100-5.500-4-3.700 5.400-.7z" /></svg>
            </UrlBar>
            <Extensions>
              {extensions.map((e, i) => (
                <ExtButton key={i}>
                  {e.icon}
                  {e.badge && <ExtBadge $bg={e.badge[1]}>{e.badge[0]}</ExtBadge>}
                </ExtButton>
              ))}
            </Extensions>
          </Toolbar>

          <Viewport>
            <Site>
              <Upper>
                <MainColumn>
                  <Summary>
                    <RatingCard>
                      <ScoreDial><ScoreRing><ScoreCore /></ScoreRing></ScoreDial>
                      <Votes>
                        <VoteButton $bg="#33a52c"><FaThumbsUp /></VoteButton>
                        546
                      </Votes>
                      <Votes>
                        13
                        <VoteButton $bg="#dd4b1a"><FaThumbsDown /></VoteButton>
                      </Votes>
                    </RatingCard>
                    <Description>
                      {"подземного мира Зауна – рассказывает о становлении двух легендарных чемпионов\nЛиги и о той силе, что разведёт их по разные стороны баррикад...."}
                    </Description>
                  </Summary>
                  <Title>Смотреть онлайн Аркейн (2021) бесплатно</Title>
                </MainColumn>
                <Sidebar>
                  <Select $mt={-18}>
                    По умолчанию
                    <SelectArrow width="14" height="11" viewBox="0 0 14 11"><path d="M.3.500h13.400L7 10.500z" fill="#005f73" /></SelectArrow>
                  </Select>
                  <Select $mt={18}>
                    По убыванию
                    <SelectArrow width="14" height="11" viewBox="0 0 14 11"><path d="M.3.500h13.400L7 10.500z" fill="#005f73" /></SelectArrow>
                  </Select>
                  <SearchButton>ПОИСК</SearchButton>
                </Sidebar>
              </Upper>

              <PlayerTabs>
                <PlayerTab $active>Плеер Full HD</PlayerTab>
                <PlayerTab>Смотреть онлайн</PlayerTab>
                <PlayerTab>Трейлер</PlayerTab>
                <PlayerActions>
                  <Action>
                    <LightToggle><LightKnob /></LightToggle>
                    Свет
                  </Action>
                  <Action><FaRegHeart size={26} />Добавить в закладки</Action>
                  <Action><FaExclamationTriangle size={26} />Есть жалоба?</Action>
                </PlayerActions>
              </PlayerTabs>

              <Player>
                <PlayerHead>
                  <Dropdown $width={171} $mr={72.500}>8 серия<Chevron /></Dropdown>
                  <Dropdown $width={290}>Рус. Дублированный<Chevron /></Dropdown>
                  <ShareIcon width="34" height="34" viewBox="0 0 34 34" fill="none" stroke="#fff" strokeWidth="2.200">
                    <circle cx="5" cy="16" r="4" />
                    <circle cx="28" cy="5.500" r="4" />
                    <circle cx="29" cy="28.500" r="4" />
                    <path d="M8.700 14.300l15.600-7.100M8.500 18l17 8.500" />
                  </ShareIcon>
                </PlayerHead>
                <Stage>
                  <svg width="70" height="82" viewBox="0 0 70 82"><path d="M0 0l70 41L0 82z" fill="#7dc12f" /></svg>
                  <Hint>Смотреть (пробел)<br />или клик в любом месте</Hint>
                </Stage>
                <Progress><ProgressKnob /></Progress>
                <Controls>
                  <ControlGroup $gap={37}>
                    <svg width="29" height="30" viewBox="0 0 29 30" fill="#fff"><path d="M0 1h6v12.500L29 1v28L6 16.500V29H0z" /></svg>
                    <svg width="41" height="40" viewBox="-8 0 41 40" fill="#fff"><path d="M0 0l34 20L0 40z" /></svg>
                    <svg width="30" height="30" viewBox="0 0 30 30" fill="#fff"><path d="M30 0h-6v13L0 .5v29L24 17v13h6z" /></svg>
                    <span>15:19</span>
                  </ControlGroup>
                  <ControlGroup $gap={36} $right>
                    <svg width="42" height="36" viewBox="0 0 42 36" fill="none" stroke="#fff" strokeWidth="2">
                      <path d="M1 11h9L19 1.500h2v33h-2L10 25H1z" />
                      <path d="M27 14.500c2.500 1 2.500 6 0 7M27 8.500c11 1.500 11 17.500 0 19M27 2c18.500 2 18.500 30 0 32" />
                    </svg>
                    <Quality>
                      <svg width="36" height="36" viewBox="1 0 36 36" fill="none" stroke="#fff" strokeWidth="2">
                        <path d="M14.500 1h7v4.500l4 2 4-2.300 4.500 6.300-3.500 3v5l4 3-4 6-4.500-1.500-4 2.500-.5 5h-7l-.5-5-4-2.500L5 28.500l-4-6 4-3v-5l-3.500-3L6 5.200l4.500 2.300 4-2z" />
                        <circle cx="18" cy="18" r="6" />
                      </svg>
                      <QualityBadge>SD</QualityBadge>
                    </Quality>
                    <svg width="34" height="34" viewBox="0 0 34 34" fill="none" stroke="#fff" strokeWidth="2">
                      <path d="M19 1h14v14M33 1L21 13M1 19v14h14M1 33l12-12" />
                    </svg>
                  </ControlGroup>
                </Controls>
              </Player>

              <ShareRow>
                {shareLinks.map((s) => (
                  <ShareButton key={s.bg} $bg={s.bg} $size={s.size}>{s.icon}</ShareButton>
                ))}
              </ShareRow>
            </Site>
            <Scrollbar />
          </Viewport>
        </Browser>
      </Desktop>
    </>
  );
}
